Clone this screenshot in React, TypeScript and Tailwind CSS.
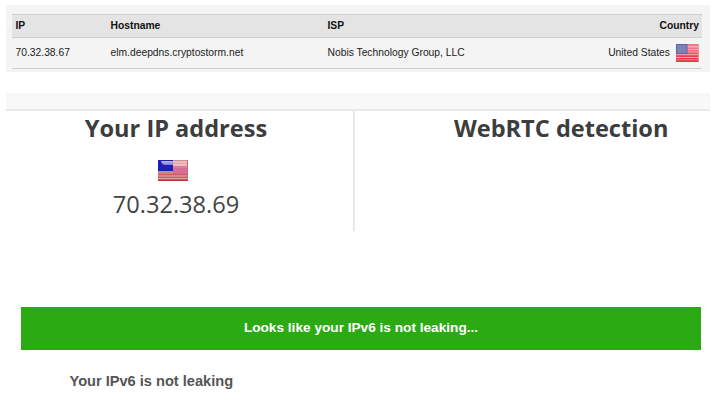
import React from 'react';

interface LookupRow {
  ip: string;
  hostname: string;
  isp: string;
  country: string;
}

const rows: LookupRow[] = [
  {
    ip: '70.32.38.67',
    hostname: 'elm.deepdns.cryptostorm.net',
    isp: 'Nobis Technology Group, LLC',
    country: 'United States',
  },
];

const FlatFlag: React.FC = () => (
  <svg width="23" height="18" viewBox="0 0 23 18" className="shrink-0">
    <rect width="23" height="18" fill="#f5adb3" />
    <rect width="22.5" height="2" fill="#ee7c86" />
    <rect y="3.5" width="22.5" height="1.5" fill="#ee7781" />
    <rect y="6" width="22.5" height="1.5" fill="#ee6a75" />
    <rect y="8.5" width="22.5" height="1.7" fill="#ee5260" />
    <rect y="11.2" width="22.5" height="1.8" fill="#ee3f4e" />
    <rect y="14" width="22.5" height="1.6" fill="#ee3747" />
    <rect y="15.6" width="22.5" height="0.6" fill="#f37580" />
    <rect y="16.2" width="22.5" height="1.8" fill="#ee3445" />
    <rect width="11.5" height="10" fill="#6062a4" />
    <rect x="1" y="1" width="9.5" height="8" fill="#7f81b8" />
  </svg>
);

const GlossyFlag: React.FC = () => (
  <svg width="30" height="21" viewBox="0 0 30 21">
    <defs>
      <linearGradient id="gloss" x1="0" y1="0" x2="0" y2="1">
        <stop offset="0" stopColor="#b9b9e4" />
        <stop offset="1" stopColor="#7b7bd0" />
      </linearGradient>
    </defs>
    <rect width="30" height="21" fill="#d96c78" />
    <rect width="30" height="1" fill="#d08e92" />
    <rect x="15" y="1" width="14" height="5" fill="#e9bcc0" />
    <rect x="15" y="3" width="14" height="1" fill="#e3a9ae" />
    <rect x="15" y="6" width="14" height="2" fill="#da7f90" />
    <rect x="15" y="8" width="14" height="5" fill="#d66c9c" />
    <rect y="12" width="15" height="2" fill="#f07a5c" />
    <rect y="14" width="30" height="1" fill="#cc5f69" />
    <rect y="15" width="30" height="2" fill="#dc848b" />
    <rect y="17" width="30" height="1" fill="#cb5a63" />
    <rect y="18" width="30" height="1.5" fill="#e2a0a1" />
    <rect y="19.5" width="30" height="1.5" fill="#bd3339" />
    <rect width="15" height="11" fill="#1e1eb4" />
    <path d="M3 1h12v4H7Q4 5 3 1z" fill="url(#gloss)" />
    <rect y="11" width="15" height="1.3" fill="#7ba2e2" />
    <rect x="29" width="1" height="19" fill="#cb6870" />
  </svg>
);

const LookupTable: React.FC = () => (
  <section className="ml-[6px] h-[67px] w-[704px] bg-[#f4f4f4] pt-[9px] pr-2 pl-[6px] font-['Liberation_Sans',sans-serif] text-[10.3px] text-[#222]">
    <div className="grid h-6 grid-cols-[95px_217px_1fr_auto] items-center border-y border-[#cecece] bg-[#e4e4e4] pr-[3px] pl-[3.5px] font-bold text-[#111]">
      <span>IP</span>
      <span>Hostname</span>
      <span>ISP</span>
      <span>Country</span>
    </div>
    {rows.map((row) => (
      <div
        key={row.ip}
        className="grid h-[31px] grid-cols-[95px_217px_1fr_auto] items-center border-b border-[#cecece] pr-[3px] pl-[3.5px]"
      >
        <span>{row.ip}</span>
        <span>{row.hostname}</span>
        <span>{row.isp}</span>
        <span className="flex items-center gap-[6px]">
          {row.country}
          <FlatFlag />
        </span>
      </div>
    ))}
  </section>
);

const DetectionPanel: React.FC = () => (
  <section className="mt-[21px] ml-[6px] w-[704px] font-['Open_Sans',sans-serif] text-[#3b3d3e]">
    <div className="h-[18px] border-b-2 border-[#e9e9e9] bg-[#f8f8f8]" />
    <div className="flex h-[120px]">
      <div className="flex w-[349px] flex-col items-center border-r-2 border-[#e9e9e9] pr-[7px]">
        <h2 className="text-[23.55px] leading-[34px] font-bold">Your IP address</h2>
        <div className="mt-[15px] mr-[7px]">
          <GlossyFlag />
        </div>
        <p className="mt-[7px] text-[23.6px] leading-8 text-[#444]">70.32.38.69</p>
      </div>
      <div className="flex-1 pl-[99px]">
        <h2 className="text-[23.55px] leading-[34px] font-bold">WebRTC detection</h2>
      </div>
    </div>
  </section>
);

const LeakResult: React.FC = () => (
  <section className="mt-[76px] font-['Liberation_Sans',sans-serif] font-bold">
    <div className="ml-[21px] flex h-[43px] w-[680px] items-center justify-center bg-[#2caa14] text-[13.65px] text-white">
      Looks like your IPv6 is not leaking...
    </div>
    <p className="mt-[21px] ml-[69.5px] text-[14.6px] leading-5 text-[#555]">Your IPv6 is not leaking</p>
  </section>
);

const App: React.FC = () => (
  <main className="h-[416px] w-[724px] overflow-hidden bg-white pt-[5px]">
    <LookupTable />
    <DetectionPanel />
    <LeakResult />
  </main>
);

export default App;
